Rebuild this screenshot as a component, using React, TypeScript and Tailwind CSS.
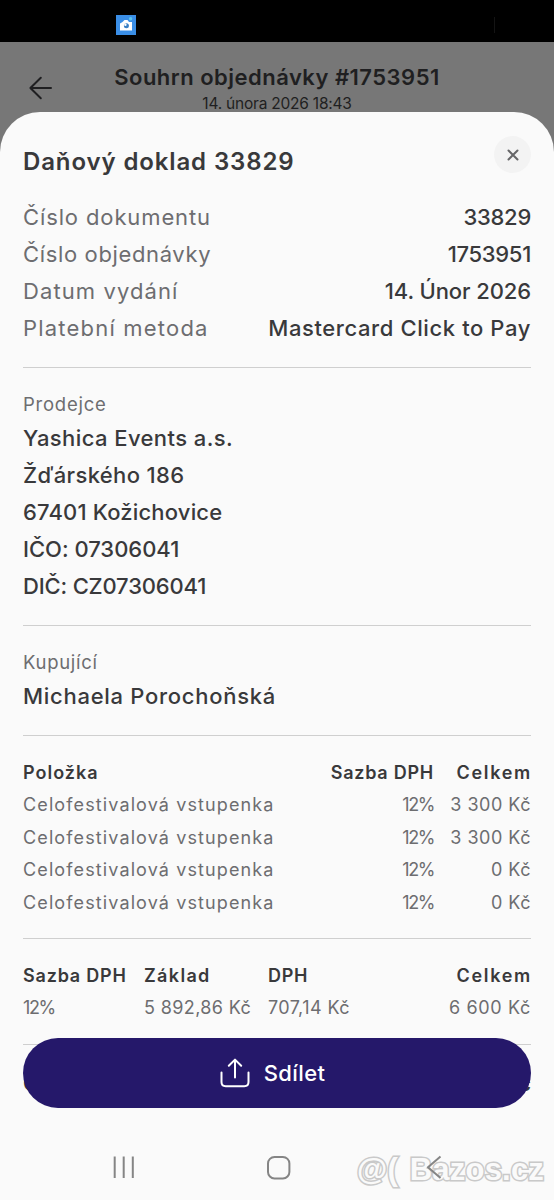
import { clsx } from 'clsx';

const details = [
  { label: 'Číslo dokumentu', value: '33829', labelClass: 'tracking-[0.88px]', valueClass: 'tracking-[-0.25px]' },
  { label: 'Číslo objednávky', value: '1753951', labelClass: 'tracking-[0.64px]', valueClass: 'tracking-[-0.3px]' },
  { label: 'Datum vydání', value: '14. Únor 2026', labelClass: 'tracking-[1.09px]', valueClass: 'tracking-[-0.1px]' },
  { label: 'Platební metoda', value: 'Mastercard Click to Pay', labelClass: 'tracking-[1.2px]', valueClass: 'tracking-[0.6px]' },
];

const seller = [
  { text: 'Yashica Events a.s.', className: 'tracking-[0.41px]' },
  { text: 'Žďárského 186', className: 'tracking-[0.35px]' },
  { text: '67401 Kožichovice', className: 'tracking-[0.17px]' },
  { text: 'IČO: 07306041', className: 'tracking-[-0.02px]' },
  { text: 'DIČ: CZ07306041', className: 'tracking-[-0.18px]' },
];

const items = [
  { name: 'Celofestivalová vstupenka', rate: '12%', total: '3 300 Kč' },
  { name: 'Celofestivalová vstupenka', rate: '12%', total: '3 300 Kč' },
  { name: 'Celofestivalová vstupenka', rate: '12%', total: '0 Kč' },
  { name: 'Celofestivalová vstupenka', rate: '12%', total: '0 Kč' },
];

function Divider({ className = 'my-5' }: { className?: string }) {
  return <div className={clsx('h-px bg-[#cfcfcf]', className)} />;
}

function StatusBar() {
  return (
    <div className="flex h-[42px] items-center bg-black pt-2 pr-[59px] pl-[116px]">
      <svg viewBox="0 0 20 20" className="h-5 w-5">
        <rect width="20" height="20" fill="#3a8ee6" />
        <path d="M4 8.5 6.5 7l2-2h3l1.5 2H16v8.5H4z" fill="#fff" />
        <circle cx="10.4" cy="10.8" r="2.5" fill="#3a7fc4" />
        <circle cx="9.4" cy="9.8" r="1.2" fill="#fff" />
        <circle cx="14.6" cy="3.8" r="1.7" fill="#5cc6ee" />
      </svg>
      <div className="ml-auto h-4 w-px bg-[#141414]" />
    </div>
  );
}

function OrderHeader() {
  return (
    <header className="grid h-[70px] grid-cols-[80px_1fr_80px] text-[#1f1f21]">
      <svg viewBox="0 0 24 24" className="mt-[34px] ml-[28px] h-6 w-6" fill="none" stroke="currentColor" strokeWidth="2" strokeLinecap="round" strokeLinejoin="round">
        <path d="M12.8 1.8 2.4 12l10.4 10.2M2.4 12H23" />
      </svg>
      <div className="pt-[20px] text-center whitespace-nowrap">
        <h1 className="text-[22px] leading-[30px] font-semibold tracking-[0.48px]">Souhrn objednávky #1753951</h1>
        <p className="text-[15.5px] leading-[23px] tracking-[-0.22px]">14. února 2026 18:43</p>
      </div>
    </header>
  );
}

function ShareButton() {
  return (
    <button className="absolute inset-x-[23px] top-[926px] flex h-[70px] items-center justify-center gap-[14px] rounded-full bg-[#25186a] pr-[9px] text-white">
      <svg viewBox="0 0 30 30" className="h-[30px] w-[30px]" fill="none" stroke="currentColor" strokeWidth="2" strokeLinecap="round" strokeLinejoin="round">
        <path d="M1.5 14.5V24q0 4.2 4.2 4.2h18.6q4.2 0 4.2-4.2v-9.5" />
        <path d="M15 19.5V1.8M8.8 7.8 15 1.6l6.2 6.2" />
      </svg>
      <span className="text-[22px] font-medium tracking-[0.4px]">Sdílet</span>
    </button>
  );
}

function NavBar() {
  return (
    <div className="absolute inset-x-0 bottom-0 h-[66px]">
      <span className="absolute top-[18px] left-[357px] font-['Liberation_Sans',sans-serif] text-[31px] leading-[36px] font-bold tracking-[0.2px] whitespace-nowrap text-[#fafafa] [paint-order:stroke_fill] [word-spacing:3px] [-webkit-text-stroke:3px_#c9c9c9]">
        @( Bazos.cz
      </span>
      <svg viewBox="0 0 554 66" className="absolute inset-0 h-[66px] w-full" fill="none" stroke="#858585" strokeWidth="2">
        <path d="M114.7 22.5v21.5M123.7 22.5v21.5M132.8 22.5v21.5" />
        <rect x="268" y="23" width="21.4" height="21.4" rx="6.5" />
        <path d="M440.5 22.5 428 33.3l12.5 10.8" />
      </svg>
    </div>
  );
}

export default function App() {
  return (
    <div className="h-[1200px] w-full overflow-hidden bg-[#777777] font-['Inter',sans-serif]">
      <StatusBar />
      <OrderHeader />

      <main className="relative h-[1088px] overflow-hidden rounded-t-[40px] bg-[#fafafa] px-[23px] text-[#39393b]">
        <div className="flex h-[87px] justify-between">
          <h2 className="pt-8 text-2xl leading-9 font-semibold tracking-[0.88px]">Daňový doklad 33829</h2>
          <button className="mt-6 flex h-[37px] w-[37px] items-center justify-center rounded-full bg-[#f3f3f3]">
            <svg viewBox="0 0 12 12" className="h-3 w-3" stroke="#666668" strokeWidth="2" strokeLinecap="round">
              <path d="m1.5 1.5 9 9M10.5 1.5l-9 9" />
            </svg>
          </button>
        </div>

        <dl className="text-[22px] leading-[37px]">
          {details.map((d) => (
            <div key={d.label} className="flex justify-between">
              <dt className={clsx('text-[#6d6d70]', d.labelClass)}>{d.label}</dt>
              <dd className={clsx('font-medium', d.valueClass)}>{d.value}</dd>
            </div>
          ))}
        </dl>

        <Divider />

        <section className="text-[22px] leading-[37px] font-medium">
          <p className="text-[18.5px] leading-8 font-normal tracking-[0.75px] text-[#6d6d70]">Prodejce</p>
          {seller.map((line) => (
            <p key={line.text} className={line.className}>{line.text}</p>
          ))}
        </section>

        <Divider />

        <section className="text-[22px] leading-[37px] font-medium">
          <p className="text-[18.5px] leading-8 font-normal tracking-[0.7px] text-[#6d6d70]">Kupující</p>
          <p className="tracking-[0.72px]">Michaela Porochoňská</p>
        </section>

        <Divider className="mt-5 mb-[21px]" />

        <section className="text-lg leading-[32.4px] text-[#6d6d70]">
          <div className="grid grid-cols-[1fr_112px_97px] font-semibold text-[#39393b]">
            <span className="tracking-[1px]">Položka</span>
            <span className="text-right tracking-[0.75px]">Sazba DPH</span>
            <span className="-mr-px text-right tracking-[1.7px]">Celkem</span>
          </div>
          {items.map((item, i) => (
            <div key={i} className="grid grid-cols-[1fr_112px_97px]">
              <span className="tracking-[1.12px]">{item.name}</span>
              <span className="text-right tracking-[-1.4px]">{item.rate}</span>
              <span className="text-right tracking-[0.5px]">{item.total}</span>
            </div>
          ))}
        </section>

        <Divider className="mt-[19px] mb-[21px]" />

        <section className="text-lg leading-[32.4px] text-[#6d6d70]">
          <div className="grid grid-cols-[121px_124px_1fr_auto] font-semibold text-[#39393b]">
            <span className="tracking-[0.8px]">Sazba DPH</span>
            <span className="tracking-[1.35px]">Základ</span>
            <span className="tracking-[0.7px]">DPH</span>
            <span className="-mr-px tracking-[1.7px]">Celkem</span>
          </div>
          <div className="grid grid-cols-[121px_124px_1fr_auto]">
            <span className="tracking-[-1.4px]">12%</span>
            <span className="tracking-[0.38px]">5 892,86 Kč</span>
            <span className="tracking-[0.42px]">707,14 Kč</span>
            <span className="tracking-[0.65px]">6 600 Kč</span>
          </div>
        </section>

        <Divider className="mt-[19px] mb-5" />

        <div className="flex justify-between text-[22px] leading-9 font-semibold">
          <span>Celkem</span>
          <span>6 600 Kč</span>
        </div>

        <ShareButton />
        <NavBar />
      </main>
    </div>
  );
}
